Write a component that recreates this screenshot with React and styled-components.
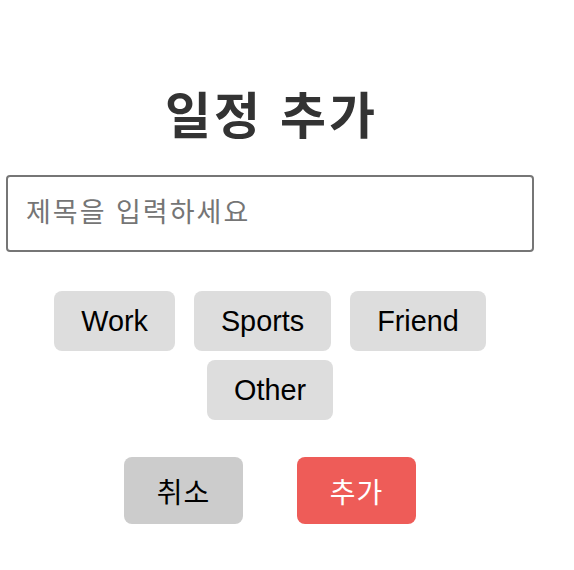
import styled, { createGlobalStyle } from "styled-components";

const GlobalStyle = createGlobalStyle`
  body {
    margin: 0;
    background: #fff;
    font-family: "Liberation Sans", "Noto Sans CJK KR", sans-serif;
  }
`;

const categories = ["Work", "Sports", "Friend", "Other"];

const App = () => {
  return (
    <>
      <GlobalStyle />
      <Form>
        <Title>일정 추가</Title>
        <TitleInput placeholder="제목을 입력하세요" />
        <CategoryList>
          {categories.map((c) => (
            <CategoryButton key={c}>{c}</CategoryButton>
          ))}
        </CategoryList>
        <Actions>
          <ActionButton>취소</ActionButton>
          <ActionButton $primary>추가</ActionButton>
        </Actions>
      </Form>
    </>
  );
};

export default App;

// STYLING

const Form = styled.div`
  width: 528px;
  padding: 86px 6px 0;
  display: flex;
  flex-direction: column;
  align-items: center;
`;

const Title = styled.h1`
  margin: 0 0 27px;
  padding-left: 3px;
  font-size: 50px;
  line-height: 62px;
  letter-spacing: 3px;
  font-weight: 700;
  color: #333;
`;

const TitleInput = styled.input`
  box-sizing: border-box;
  width: 528px;
  height: 77px;
  padding: 0 18px;
  border: 2px solid #767676;
  border-radius: 4px;
  font-family: inherit;
  font-size: 27px;
  letter-spacing: 2px;
  color: #333;
  outline: none;

  &::placeholder {
    color: #757575;
  }
`;

const CategoryList = styled.div`
  width: 450px;
  margin-top: 39px;
  display: flex;
  flex-wrap: wrap;
  justify-content: center;
  column-gap: 19px;
  row-gap: 9px;
`;

const CategoryButton = styled.button`
  height: 60px;
  padding: 0 27px;
  border: none;
  border-radius: 8px;
  background: #ddd;
  color: #000;
  font-family: inherit;
  font-size: 28.8px;
  cursor: pointer;
`;

const Actions = styled.div`
  margin-top: 37px;
  display: flex;
  gap: 54px;
`;

const ActionButton = styled.button`
  width: 119px;
  height: 67px;
  border: none;
  border-radius: 8px;
  background: ${(p) => (p.$primary ? "#ee5c58" : "#ccc")};
  color: ${(p) => (p.$primary ? "#fff" : "#000")};
  font-family: inherit;
  font-size: 28px;
  letter-spacing: 1px;
  cursor: pointer;
`;
